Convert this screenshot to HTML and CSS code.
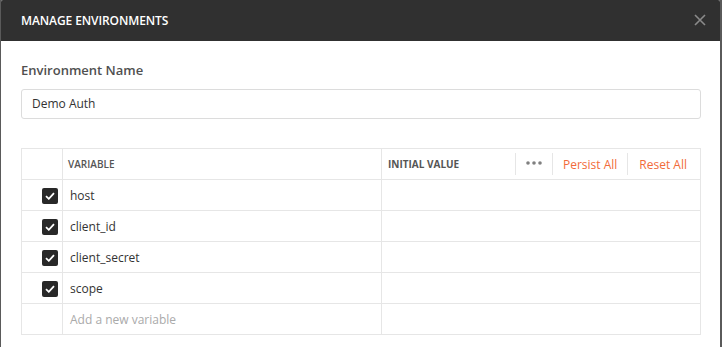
FILE: index.html
```html
<!DOCTYPE html>
<html lang="en">
	<head>
		<meta charset="utf-8">
		<title>Manage Environments</title>
		<link rel="stylesheet" href="styles.css">
	</head>
	<body>
		<div class="modal">
			<div class="modal-header">
				<span class="modal-title">MANAGE ENVIRONMENTS</span>
				<span class="close">
					<svg width="12" height="12" viewBox="0 0 12 12"><path d="M1 1L11 11M11 1L1 11" stroke="#8a8a8a" stroke-width="1.6"/></svg>
				</span>
			</div>
			<div class="modal-body">
				<label class="field-label">Environment Name</label>
				<div class="text-input">Demo Auth</div>

				<table class="vars">
					<tr class="head">
						<th class="col-check"></th>
						<th class="col-key">VARIABLE</th>
						<th class="col-value">
							<div class="value-head">
								<span class="value-title">INITIAL VALUE</span>
								<span class="actions">
									<span class="action dots"><svg width="16" height="4" viewBox="0 0 16 4"><circle cx="2" cy="2" r="1.8" fill="#808080"/><circle cx="8" cy="2" r="1.8" fill="#808080"/><circle cx="14" cy="2" r="1.8" fill="#808080"/></svg></span>
									<span class="action link">Persist All</span>
									<span class="action link">Reset All</span>
								</span>
							</div>
						</th>
					</tr>
					<tr>
						<td class="col-check"><span class="checkbox"><svg width="10" height="8" viewBox="0 0 10 8"><path d="M1 4.2L3.8 6.8L9 1.2" stroke="#fff" stroke-width="1.8" fill="none"/></svg></span></td>
						<td class="col-key">host</td>
						<td class="col-value"></td>
					</tr>
					<tr>
						<td class="col-check"><span class="checkbox"><svg width="10" height="8" viewBox="0 0 10 8"><path d="M1 4.2L3.8 6.8L9 1.2" stroke="#fff" stroke-width="1.8" fill="none"/></svg></span></td>
						<td class="col-key">client_id</td>
						<td class="col-value"></td>
					</tr>
					<tr>
						<td class="col-check"><span class="checkbox"><svg width="10" height="8" viewBox="0 0 10 8"><path d="M1 4.2L3.8 6.8L9 1.2" stroke="#fff" stroke-width="1.8" fill="none"/></svg></span></td>
						<td class="col-key">client_secret</td>
						<td class="col-value"></td>
					</tr>
					<tr>
						<td class="col-check"><span class="checkbox"><svg width="10" height="8" viewBox="0 0 10 8"><path d="M1 4.2L3.8 6.8L9 1.2" stroke="#fff" stroke-width="1.8" fill="none"/></svg></span></td>
						<td class="col-key">scope</td>
						<td class="col-value"></td>
					</tr>
					<tr>
						<td class="col-check"></td>
						<td class="col-key placeholder">Add a new variable</td>
						<td class="col-value"></td>
					</tr>
				</table>
			</div>
		</div>
	</body>
</html>
```
FILE: styles.css
```css
html, body {
	margin: 0;
	padding: 0;
	height: 100%;
}
body {
	background-color: #5a5a5a;
	font-family: 'Open Sans', 'Liberation Sans', sans-serif;
	overflow: hidden;
}
.modal {
	margin-left: 1px;
	width: 719px;
	height: 100%;
	background-color: #fff;
	border-top-left-radius: 2px;
	border-top-right-radius: 2px;
}
.modal-header {
	display: flex;
	align-items: center;
	justify-content: space-between;
	height: 41px;
	padding: 0 14px 0 20px;
	background-color: #303030;
	border-top-left-radius: 2px;
	border-top-right-radius: 2px;
}
.modal-title {
	color: #fff;
	font-size: 12px;
	font-weight: 600;
	letter-spacing: -0.1px;
}
.close {
	display: flex;
	width: 12px;
	height: 12px;
	margin-top: -1px;
}
.modal-body {
	padding: 20px 19px 0 20px;
}
.field-label {
	display: block;
	color: #505050;
	font-size: 13px;
	font-weight: 600;
	line-height: 18px;
}
.text-input {
	margin-top: 10px;
	height: 28px;
	line-height: 28px;
	padding: 0 10px;
	border: 1px solid #dcdcdc;
	border-radius: 3px;
	font-size: 12px;
	color: #333;
}
.vars {
	margin-top: 29px;
	width: 680px;
	border-collapse: collapse;
	table-layout: fixed;
}
.vars th, .vars td {
	border: 1px solid #e6e6e6;
	height: 30px;
	padding: 0;
	font-size: 12px;
	color: #333;
	text-align: left;
	vertical-align: middle;
}
.vars th {
	font-size: 10px;
	color: #555;
	font-weight: 600;
}
.col-check {
	width: 40px;
	text-align: right !important;
}
.col-key {
	width: 313px;
	padding-left: 7px !important;
}
.vars th.col-key {
	padding-left: 5px !important;
}
.vars th.col-value {
	padding-left: 6px;
}
.value-head {
	display: flex;
	align-items: center;
	justify-content: space-between;
}
.value-title {
	font-weight: 700;
}
.actions {
	display: flex;
	align-items: center;
}
.action {
	display: flex;
	align-items: center;
	height: 22px;
	border-left: 1px solid #e6e6e6;
}
.dots {
	padding: 0 10px 0 10px;
}
.dots svg {
	display: block;
	margin-top: -3px;
}
.link {
	color: #f26b3a;
	font-size: 12px;
	font-weight: 400;
	padding: 0 10px 0 10px;
}
.link:last-child {
	padding: 0 13px 0 11px;
}
.checkbox {
	display: inline-flex;
	align-items: center;
	justify-content: center;
	width: 16px;
	height: 16px;
	margin-right: 4px;
	margin-top: 1px;
	border-radius: 2px;
	background-color: #282828;
	vertical-align: middle;
}
.placeholder {
	color: #aaa !important;
}
```
